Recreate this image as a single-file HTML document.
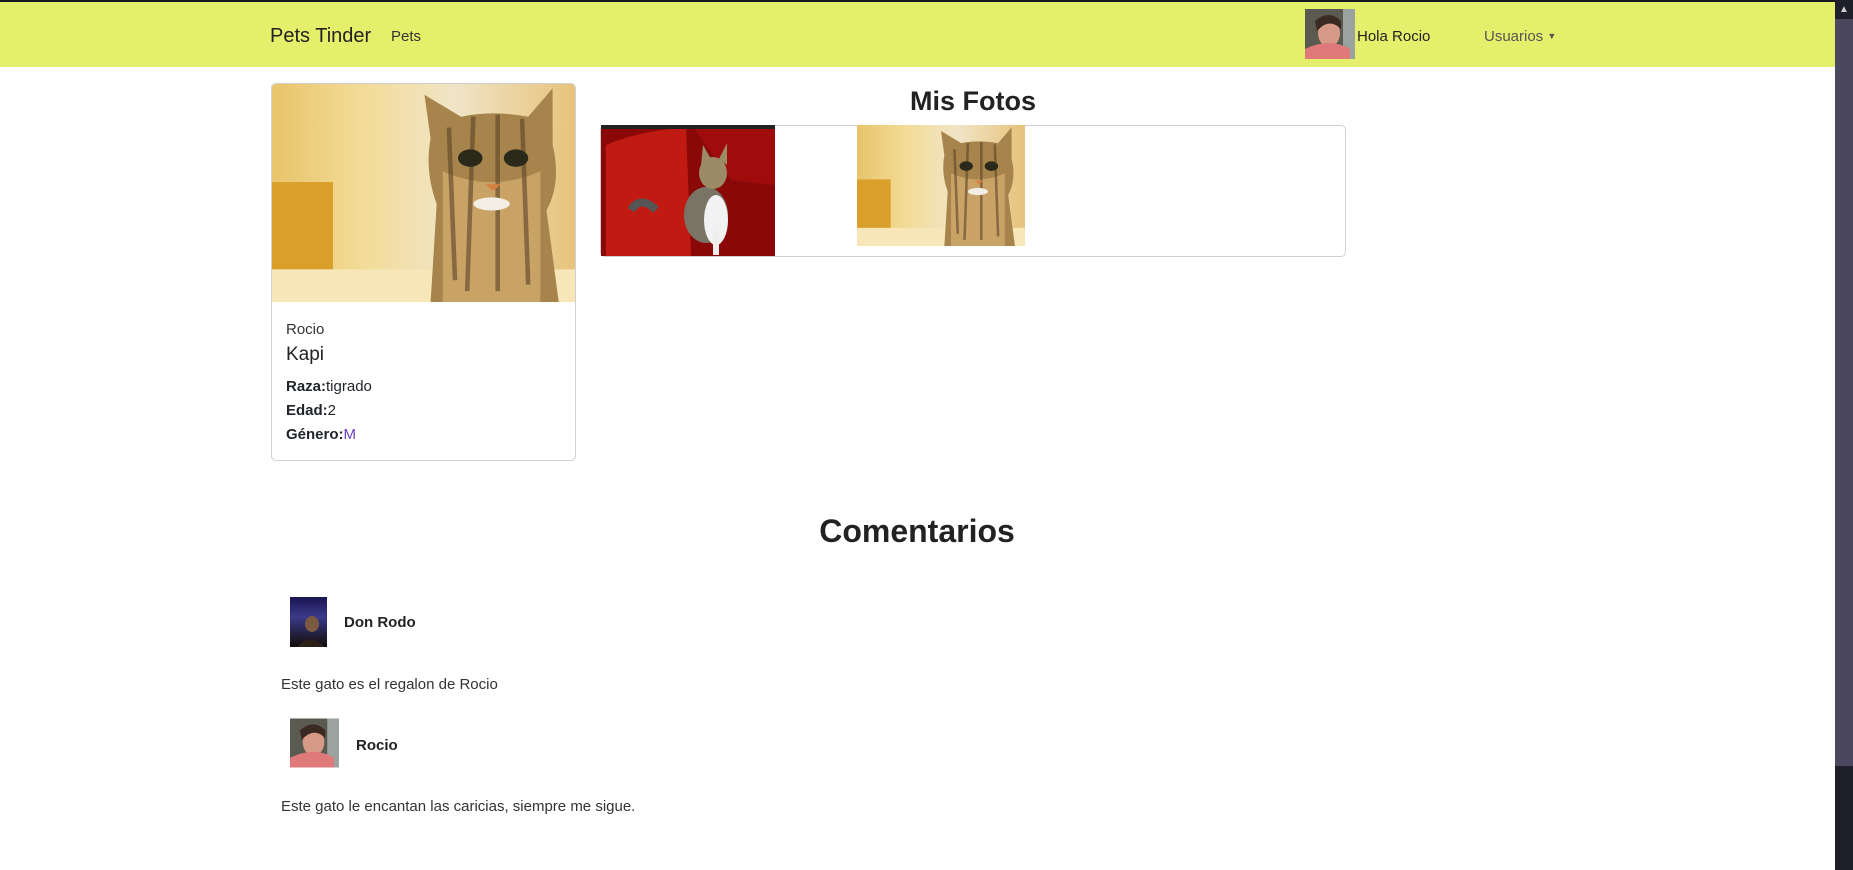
<!DOCTYPE html>
<html><head><meta charset="utf-8">
<style>
*{box-sizing:border-box;margin:0;padding:0}
html,body{width:1853px;height:870px;overflow:hidden;background:#fff;font-family:"Liberation Sans",sans-serif;color:#212529}
.top{position:absolute;left:0;top:0;width:1853px;height:2px;background:#1a1a24}
nav{position:absolute;left:0;top:2px;width:1835px;height:65px;background:#e5ef6b}
.abs{position:absolute;white-space:nowrap}
.sb{position:absolute;left:1835px;top:0;width:18px;height:870px;background:#4a475f}
.sb .up{position:absolute;left:0;top:0;width:18px;height:19px;background:#1f1e2b;color:#ccc;font-size:10px;text-align:center;line-height:19px}
.sb .bot{position:absolute;left:0;top:766px;width:18px;height:104px;background:#1f1e2b}
.card{position:absolute;left:271px;top:83px;width:305px;height:378px;border:1px solid #d0d0d0;border-radius:5px;overflow:hidden}
.gal{position:absolute;left:600px;top:125px;width:746px;height:132px;border:1px solid #d0d0d0;border-radius:5px}
svg{display:block}
</style></head><body>
<div class="top"></div>
<nav></nav>
<div class="abs" style="left:270px;top:25px;font-size:20px;color:#222">Pets Tinder</div>
<div class="abs" style="left:391px;top:28px;font-size:15px;color:#333">Pets</div>
<svg class="abs" style="left:1305px;top:9px" width="50" height="50" viewBox="0 0 50 50">
<rect width="50" height="50" fill="#5b5a50"/><rect x="38" width="12" height="50" fill="#9aa3a0"/>
<ellipse cx="24" cy="24" rx="11" ry="14" fill="#d79a86"/><path d="M10 12 Q24 0 36 12 L36 20 Q24 8 12 22Z" fill="#3a2a22"/>
<path d="M0 50 L0 40 Q25 28 45 40 L45 50Z" fill="#e07a7a"/></svg>
<div class="abs" style="left:1357px;top:28px;font-size:15px;color:#222">Hola Rocio</div>
<div class="abs" style="left:1484px;top:28px;font-size:15px;color:#555">Usuarios <span style="font-size:9px;vertical-align:2px">▼</span></div>

<svg width="0" height="0" style="position:absolute">
<defs>
<linearGradient id="bg1" x1="0" y1="0" x2="1" y2="0"><stop offset="0" stop-color="#e8c46a"/><stop offset=".3" stop-color="#f3dc98"/><stop offset=".6" stop-color="#f0e4c6"/><stop offset="1" stop-color="#e7c27a"/></linearGradient>
<g id="cat">
<rect width="100" height="100" fill="url(#bg1)"/>
<rect x="0" y="45" width="20" height="55" fill="#d99f2a"/>
<rect x="0" y="85" width="100" height="15" fill="#f6e6b8"/>
<path d="M52 100 L54 55 Q50 40 52 25 L50 5 L62 15 Q72 12 84 15 L92 2 L92 28 Q95 45 90 58 L94 100Z" fill="#a6844c"/>
<path d="M56 40 Q72 50 88 40 L88 100 L56 100Z" fill="#c9a266"/>
<path d="M58 20 L60 90 M66 15 L64 95 M74 14 L74 95 M82 16 L84 92" stroke="#5a4326" stroke-width="1.5" fill="none" opacity=".6"/>
<circle cx="65" cy="34" r="4" fill="#2b2a1a"/><circle cx="80" cy="34" r="4" fill="#2b2a1a"/>
<path d="M70 46 L75 46 L72.5 49Z" fill="#d88040"/>
<ellipse cx="72" cy="55" rx="6" ry="3" fill="#f3eee4"/>
</g>
</defs></svg>

<div class="card">
<svg width="305" height="218" viewBox="0 0 100 100" preserveAspectRatio="none"><use href="#cat"/></svg>
<div class="abs" style="left:14px;top:237px;font-size:15px;color:#333">Rocio</div>
<div class="abs" style="left:14px;top:260px;font-size:19px;color:#222">Kapi</div>
<div class="abs" style="left:14px;top:294px;font-size:15px"><b>Raza:</b>tigrado</div>
<div class="abs" style="left:14px;top:318px;font-size:15px"><b>Edad:</b>2</div>
<div class="abs" style="left:14px;top:342px;font-size:15px"><b>Género:</b><span style="color:#6f42c1">M</span></div>
</div>

<div class="abs" style="left:600px;width:746px;top:86px;text-align:center;font-size:27px;font-weight:bold;color:#222">Mis Fotos</div>
<div class="gal"></div>
<svg class="abs" style="left:601px;top:125px" width="174" height="131" viewBox="0 0 174 131">
<rect width="174" height="131" fill="#8a0808"/>
<path d="M5 20 Q40 5 85 3 L90 131 L5 131Z" fill="#c01a12"/>
<path d="M92 2 L174 2 L174 60 L130 55Z" fill="#a00c0c"/>
<rect width="174" height="4" fill="#222"/>
<path d="M30 85 Q40 70 55 85" stroke="#555" stroke-width="8" fill="none"/>
<ellipse cx="105" cy="90" rx="22" ry="28" fill="#7a7466"/>
<ellipse cx="115" cy="95" rx="12" ry="25" fill="#f2f2f2"/>
<ellipse cx="112" cy="48" rx="14" ry="16" fill="#9b8b66"/>
<path d="M100 40 L102 20 L110 34Z M118 34 L126 18 L126 40Z" fill="#9b8b66"/>
<rect x="112" y="100" width="6" height="30" fill="#eee"/>
</svg>
<svg class="abs" style="left:857px;top:125px" width="168" height="121" viewBox="0 0 100 100" preserveAspectRatio="none"><use href="#cat"/></svg>

<div class="abs" style="left:600px;width:634px;top:513px;text-align:center;font-size:32px;font-weight:bold;color:#222">Comentarios</div>

<svg class="abs" style="left:290px;top:597px" width="37" height="50" viewBox="0 0 37 50">
<defs><linearGradient id="ng" x1="0" y1="0" x2="0" y2="1"><stop offset="0" stop-color="#1a1550"/><stop offset=".4" stop-color="#3a3a8a"/><stop offset="1" stop-color="#120c08"/></linearGradient></defs>
<rect width="37" height="50" fill="url(#ng)"/><ellipse cx="22" cy="27" rx="7" ry="8" fill="#7a5a40"/><path d="M8 50 Q20 34 34 50Z" fill="#2a2018"/></svg>
<div class="abs" style="left:344px;top:614px;font-size:15px;font-weight:bold;color:#222">Don Rodo</div>
<div class="abs" style="left:281px;top:676px;font-size:15px;color:#333">Este gato es el regalon de Rocio</div>

<svg class="abs" style="left:290px;top:718px" width="49" height="50" viewBox="0 0 50 50">
<rect width="50" height="50" fill="#5b5a50"/><rect x="38" width="12" height="50" fill="#9aa3a0"/>
<ellipse cx="24" cy="24" rx="11" ry="14" fill="#d79a86"/><path d="M10 12 Q24 0 36 12 L36 20 Q24 8 12 22Z" fill="#3a2a22"/>
<path d="M0 50 L0 40 Q25 28 45 40 L45 50Z" fill="#e07a7a"/></svg>
<div class="abs" style="left:356px;top:737px;font-size:15px;font-weight:bold;color:#222">Rocio</div>
<div class="abs" style="left:281px;top:798px;font-size:15px;color:#333">Este gato le encantan las caricias, siempre me sigue.</div>

<div class="sb"><div class="up">▲</div><div class="bot"></div></div>
</body></html>
